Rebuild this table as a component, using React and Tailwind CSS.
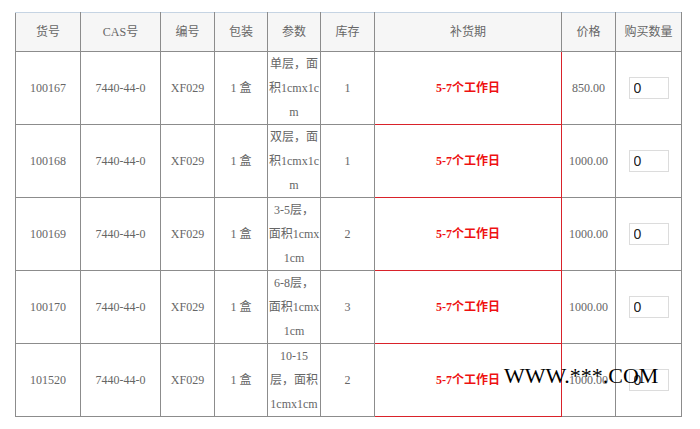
import React from 'react';

const rows = [
  { id: '100167', params: ['单层，面', '积1cmx1c', 'm'], stock: '1', price: '850.00' },
  { id: '100168', params: ['双层，面', '积1cmx1c', 'm'], stock: '1', price: '1000.00' },
  { id: '100169', params: ['3-5层，', '面积1cmx', '1cm'], stock: '2', price: '1000.00' },
  { id: '100170', params: ['6-8层，', '面积1cmx', '1cm'], stock: '3', price: '1000.00' },
  { id: '101520', params: ['10-15', '层，面积', '1cmx1cm'], stock: '2', price: '1000.00' },
];

const headers = ['货号', 'CAS号', '编号', '包装', '参数', '库存', '补货期', '价格', '购买数量'];
const widths = ['w-[65px]', 'w-[80px]', 'w-[54px]', 'w-[53px]', 'w-[53px]', 'w-[54px]', 'w-[187px]', 'w-[54px]', 'w-[66px]'];

const font = { fontFamily: '"Liberation Serif", "Noto Sans CJK SC", serif' };

export default function App() {
  return (
    <div className="relative w-[700px] h-[429px] bg-white overflow-hidden" style={font}>
      <div className="pl-[15px] pt-[12px]">
        <table className="table-fixed border-collapse w-[667px] text-[12px] text-[#666] text-center">
          <colgroup>
            {widths.map((w, i) => <col key={i} className={w} />)}
          </colgroup>
          <thead>
            <tr className="h-[39px] bg-[#f6f6f6]">
              {headers.map((h, i) => (
                <th key={i} className="font-normal border border-[#8c8c8c] border-t-[#c6d4e3] p-0">{h}</th>
              ))}
            </tr>
          </thead>
          <tbody>
            {rows.map((r, idx) => (
              <tr key={r.id} className={idx < 3 ? 'h-[73px]' : 'h-[72px]'}>
                <td className="border border-[#8c8c8c] p-0">{r.id}</td>
                <td className="border border-[#8c8c8c] p-0">7440-44-0</td>
                <td className="border border-[#8c8c8c] p-0">XF029</td>
                <td className="border border-[#8c8c8c] p-0">1 盒</td>
                <td className="border border-[#8c8c8c] p-0 leading-[24px] whitespace-nowrap">
                  {r.params.map((l, i) => <div key={i}>{l}</div>)}
                </td>
                <td className="border border-[#8c8c8c] p-0">{r.stock}</td>
                <td className="border border-[#8c8c8c] border-r-[#d9222a] border-b-[#d9222a] p-0 font-bold text-[#ee1111]">
                  5-7个工作日
                </td>
                <td className="border border-[#8c8c8c] p-0">{r.price}</td>
                <td className="border border-[#8c8c8c] p-0">
                  <div className="flex justify-center">
                    <input
                      type="text"
                      defaultValue="0"
                      className="w-[40px] h-[22px] border border-[#dcdcdc] pl-[4px] text-[14px] text-[#222] outline-none"
                      style={{ fontFamily: '"Liberation Sans", Arial, sans-serif' }}
                    />
                  </div>
                </td>
              </tr>
            ))}
          </tbody>
        </table>
      </div>
      <div className="absolute left-[504px] top-[363px] text-[22px] leading-[26px] text-black whitespace-nowrap">
        WWW.***.COM
      </div>
    </div>
  );
}
